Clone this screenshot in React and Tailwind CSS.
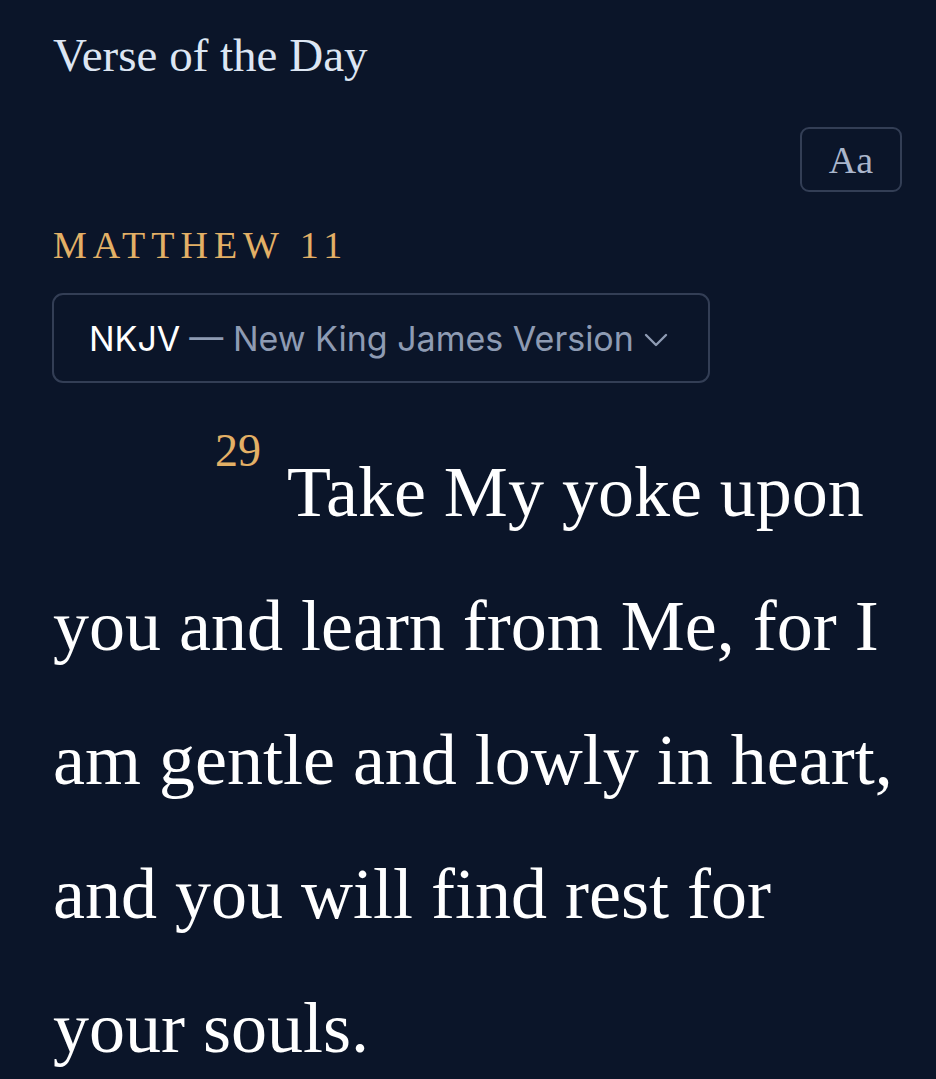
export default function App() {
  const serif = { fontFamily: '"Liberation Serif", "DejaVu Serif", serif' };
  return (
    <div className="min-h-[1079px] w-full bg-[#0b1529] overflow-hidden" style={serif}>
      <div className="pl-[53px] pr-[34px]">
        <h1 className="pt-[27px] text-[47px] leading-[56px] text-[#dde6f3] font-normal">
          Verse of the Day
        </h1>
        <div className="flex justify-end mt-[44px]">
          <button className="w-[102px] h-[65px] rounded-[9px] border-2 border-[#333e55] text-[#aab6cc] text-[38px] leading-none flex items-center justify-center" style={serif}>
            Aa
          </button>
        </div>
        <div className="mt-[33px] text-[38px] leading-[40px] tracking-[6px] text-[#e3b066]">
          MATTHEW 11
        </div>
        <div
          className="mt-[28px] w-[658px] h-[90px] -ml-px rounded-[11px] border-2 border-[#333e55] flex items-center pl-[35px] text-[34px]"
          style={{ fontFamily: 'Inter, "Noto Sans", sans-serif' }}
        >
          <span className="text-white">NKJV</span>
          <span className="text-[#8e9bb3] ml-[9px]">— New King James Version</span>
          <svg className="ml-[10px] mt-[4px]" width="24" height="16" viewBox="0 0 24 16" fill="none">
            <path d="M2 3l10 10L22 3" stroke="#8e9bb3" strokeWidth="2.4" strokeLinecap="round" strokeLinejoin="round" />
          </svg>
        </div>
        <p className="mt-[42px] text-[72px] leading-[134px] text-white indent-[162px]">
          <span className="text-[46px] leading-none text-[#e3b066] align-[50px] mr-[26px]">29</span>
          Take My yoke upon<br />
          you and learn from Me, for I<br />
          am gentle and lowly in heart,<br />
          and you will find rest for<br />
          your souls.
        </p>
      </div>
    </div>
  );
}
